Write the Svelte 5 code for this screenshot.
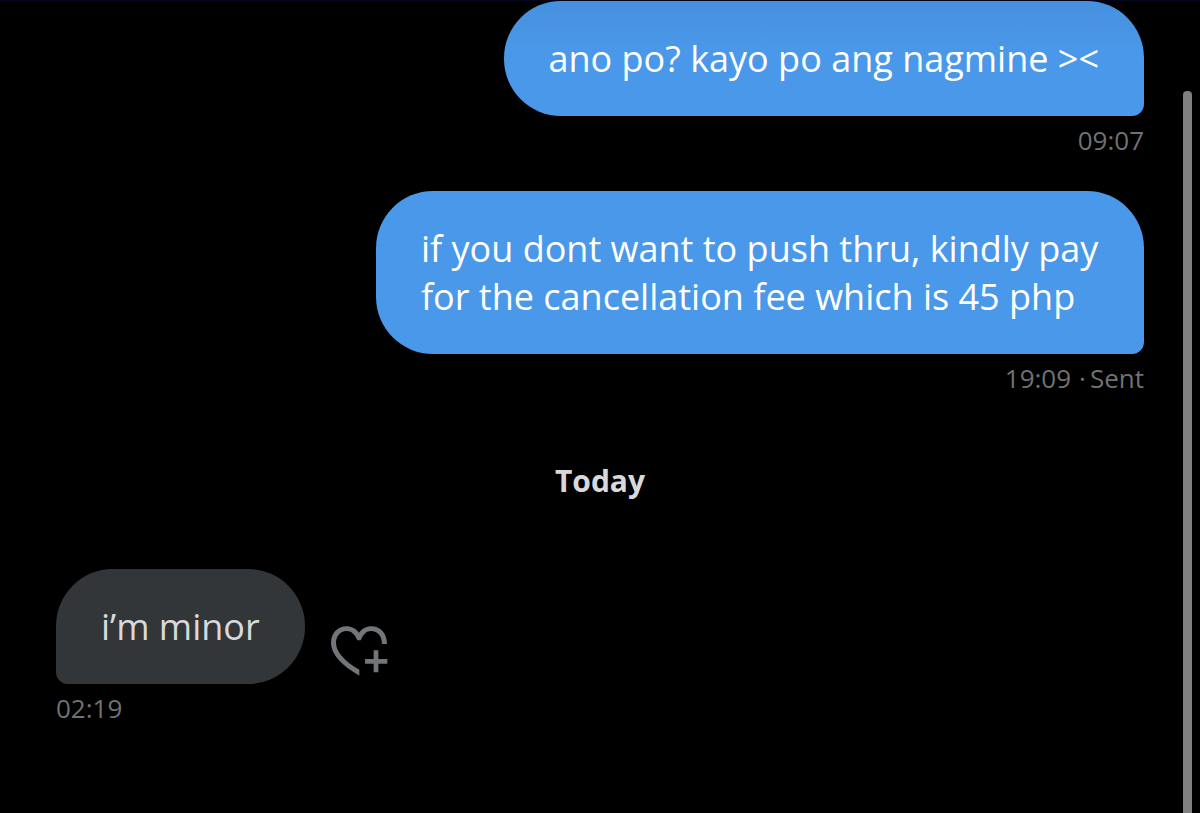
<script>
  const older = [
    { text: 'ano po? kayo po ang nagmine ><', time: '09:07', faded: true },
    { text: 'if you dont want to push thru, kindly pay for the cancellation fee which is 45 php', time: '19:09', status: 'Sent' }
  ];

  const today = [{ text: 'i’m minor', time: '02:19' }];
</script>

<main class="chat">
  {#each older as message}
    <article class="message sent">
      <p class="bubble" class:faded={message.faded}>{message.text}</p>
      <footer class="meta">
        <time>{message.time}</time>
        {#if message.status}
          <span class="status"><span>·</span><span>{message.status}</span></span>
        {/if}
      </footer>
    </article>
  {/each}

  <h2 class="day">Today</h2>

  {#each today as message}
    <article class="message received">
      <div class="row">
        <p class="bubble">{message.text}</p>
        <button class="react" type="button" aria-label="Add reaction">
          <svg viewBox="32 49 171 150" aria-hidden="true">
            <path d="M117 198C65 168 32 135 32 100C32 70 52 50 78 50C94 50 107 57 116 69C125 57 138 50 153 50C180 50 200 70 200 103H185C185 79 171 64 153 64C138 64 129 74 121 92H111C103 74 94 64 78 64C60 64 47 79 47 100C47 125 72 155 117 180Z" />
            <path d="M160 122H174V148H201V162H174V188H160V162H134V148H160Z" />
          </svg>
        </button>
      </div>
      <footer class="meta">
        <time>{message.time}</time>
      </footer>
    </article>
  {/each}

  <div class="scroll-thumb"></div>
</main>

<style>
  :global(body) {
    margin: 0;
    background: #000;
  }

  .chat {
    position: relative;
    box-sizing: border-box;
    min-height: 100vh;
    padding: 0 56px 48px;
    border-top: 1px solid #04041c;
    background: #000;
    font-family: 'Open Sans', 'Noto Sans', sans-serif;
  }

  .message {
    display: flex;
    flex-direction: column;
    align-items: flex-start;
  }

  .message + .message {
    margin-top: 35px;
  }

  .sent {
    align-items: flex-end;
  }

  .bubble {
    box-sizing: border-box;
    max-width: 768px;
    margin: 0;
    padding: 34px 45px 33px;
    border-radius: 57px;
    font-size: 36px;
    line-height: 48px;
  }

  .sent .bubble {
    border-bottom-right-radius: 12px;
    background: #4a98e9;
    color: #fff;
  }

  .sent .bubble.faded {
    background: linear-gradient(#4690de, #4a98e9 50px);
  }

  .received .bubble {
    border-bottom-left-radius: 12px;
    background: #333639;
    color: #d9d9dc;
  }

  .row {
    display: flex;
    align-items: flex-end;
    gap: 26px;
  }

  .react {
    padding: 0 0 8px;
    border: 0;
    background: none;
    cursor: pointer;
  }

  .react svg {
    display: block;
    width: 57px;
    height: 50px;
    fill: #72757a;
  }

  .meta {
    display: flex;
    gap: 8px;
    margin-top: 8px;
    color: #707174;
    font-size: 26px;
    line-height: 32px;
  }

  .status {
    display: flex;
    gap: 4px;
  }

  .day {
    margin: 67px 0 68px;
    color: #d9d9d9;
    font-size: 30px;
    font-weight: 700;
    line-height: 40px;
    text-align: center;
  }

  .scroll-thumb {
    position: absolute;
    top: 90px;
    right: 8px;
    bottom: 0;
    width: 9px;
    border-radius: 4px 4px 0 0;
    background: #808080;
  }
</style>
